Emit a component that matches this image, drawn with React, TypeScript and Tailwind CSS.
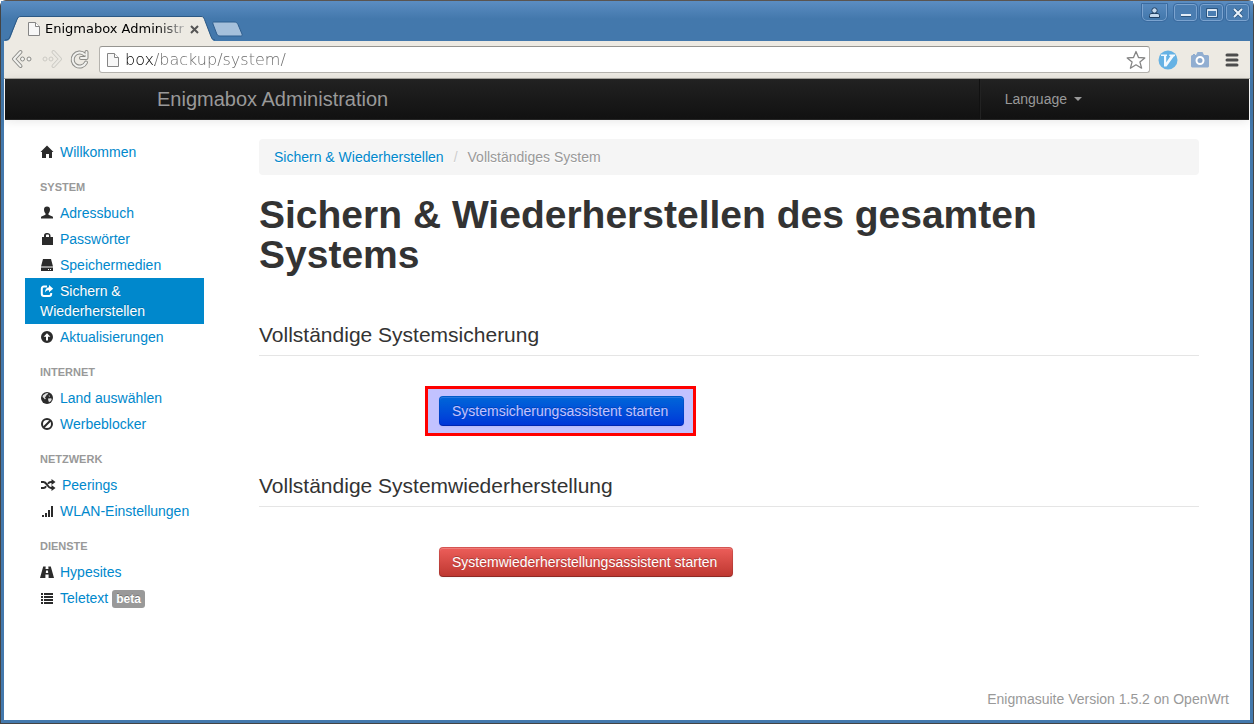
import React from 'react';

type IconProps = { className?: string };

const icon = (children: React.ReactNode, w = 14) =>
  function Icon({ className = '' }: IconProps) {
    return (
      <svg
        className={`mt-px inline-block align-text-top ${className}`}
        width={w}
        height="14"
        viewBox={`0 0 ${w} 14`}
        fill="currentColor"
        aria-hidden="true"
      >
        {children}
      </svg>
    );
  };

const HomeIcon = icon(<path d="M7 .5 13.5 7H12v6H9V9H6v4H2V7H.5z" />);
const UserIcon = icon(
  <path d="M7 .5c2 0 3 1.200 3 3 0 1.900-.8 3.300-1.500 4v1.200l4 1.700c.3.200.5.500.5.900V12.500H1v-1.200c0-.4.200-.7.500-.9l4-1.700V7.500C4.800 6.800 4 5.400 4 3.500c0-1.800 1-3 3-3z" />
);
const LockIcon = icon(
  <path d="M2 5h2V3.500C4 2 5 1 6.500 1h1C9 1 10.500 2 10.500 3.500V5H13v8H2zM6 5h3V3.600C9 3 8.500 2.500 8 2.500H7c-.6 0-1 .5-1 1.100z" fillRule="evenodd" />
);
const DriveIcon = icon(
  <path d="M3 1h8l2 7.500H1zM1 9.500h12V13H1zM8 11v1h1v-1zM10 11v1h1v-1z" fillRule="evenodd" />
);
const ShareIcon = icon(
  <>
    <path d="M7 2.500H4A2.300 2.300 0 0 0 1.800 4.800v4.900A2.300 2.300 0 0 0 4 12h5a2.300 2.300 0 0 0 2.200-2.300V9" fill="none" stroke="currentColor" strokeWidth="2" />
    <path d="M9 1l4.200 3.700L9 8.300V6.200C7.200 6.200 6 6.800 5 8.500 5 5.500 6.500 3.300 9 3.200z" />
  </>
);
const UpIcon = icon(
  <path d="M7 1a6 6 0 1 1 0 12A6 6 0 0 1 7 1zM7 3.200 3.600 6.700H6V10.500h2V6.700h2.400z" fillRule="evenodd" />
);
const GlobeIcon = icon(
  <>
    <circle cx="7" cy="7" r="6" />
    <path d="M6 2.300 8.300 2 7.500 3.500 6.500 4 6 5.500 4.800 6l1 1.500L5 8.500 3.800 7 2.500 6 3 4.200zM8.500 4.500l1.500.3-.7 1.200zM8 7.500l3-.3.8.8-.8 2-2 1.200L8.300 9.500z" fill="#fff" opacity=".85" />
  </>
);
const BanIcon = icon(
  <g fill="none" stroke="currentColor" strokeWidth="2">
    <circle cx="7" cy="7" r="5" />
    <path d="M3.500 10.500l7-7" />
  </g>
);
const ShuffleIcon = icon(
  <>
    <path d="M1 4h2.500c3.500 0 4 6 7.500 6h1M1 10h2.500c1.200 0 2-.8 2.600-1.800M8 5.800C8.700 4.700 9.600 4 11 4h1" fill="none" stroke="currentColor" strokeWidth="2" />
    <path d="M11.500 1 15.500 4l-4 3zM11.500 7l4 3-4 3z" />
  </>,
  16
);
const SignalIcon = icon(<path d="M2 11h2v2H2zM5 9h2v4H5zM8 6h2v7H8zM11 2h2v11h-2z" />);
const RoadIcon = icon(
  <path d="M3.200 1.500h2.500L5.500 4h3L8.300 1.500h2.500L14 13H8.600V9.500H5.400V13H0zM6 5.500 5.800 8h2.400L8 5.500z" fillRule="evenodd" />
);
const ListIcon = icon(
  <path d="M1 2h2v2H1zM4 2h9v2H4zM1 5h2v2H1zM4 5h9v2H4zM1 8h2v2H1zM4 8h9v2H4zM1 11h2v2H1zM4 11h9v2H4z" />
);

type Item = {
  label: string;
  Icon: React.ComponentType<IconProps>;
  active?: boolean;
  badge?: string;
};

const groups: { title?: string; items: Item[] }[] = [
  { items: [{ label: 'Willkommen', Icon: HomeIcon }] },
  {
    title: 'System',
    items: [
      { label: 'Adressbuch', Icon: UserIcon },
      { label: 'Passwörter', Icon: LockIcon },
      { label: 'Speichermedien', Icon: DriveIcon },
      { label: 'Sichern & Wiederherstellen', Icon: ShareIcon, active: true },
      { label: 'Aktualisierungen', Icon: UpIcon },
    ],
  },
  {
    title: 'Internet',
    items: [
      { label: 'Land auswählen', Icon: GlobeIcon },
      { label: 'Werbeblocker', Icon: BanIcon },
    ],
  },
  {
    title: 'Netzwerk',
    items: [
      { label: 'Peerings', Icon: ShuffleIcon },
      { label: 'WLAN-Einstellungen', Icon: SignalIcon },
    ],
  },
  {
    title: 'Dienste',
    items: [
      { label: 'Hypesites', Icon: RoadIcon },
      { label: 'Teletext', Icon: ListIcon, badge: 'beta' },
    ],
  },
];

function PageIcon() {
  return (
    <svg width="12" height="16" viewBox="0 0 12 16" className="shrink-0" aria-hidden="true">
      <path d="M.5 1.500h7l4 4v9H.5z" fill="#f7f7f7" stroke="#858585" />
      <path d="M7.500 1.500v4h4" fill="#fff" stroke="#858585" />
    </svg>
  );
}

function TitleBar() {
  const box =
    'flex h-[17px] w-[23px] items-center justify-center rounded-[3px] border border-[#7ba3cf] bg-[#4a7db1] outline outline-[#3a6ba0]';
  return (
    <header className="flex h-10 items-end justify-between bg-linear-to-b from-[#5b8dc2] to-[#4378ac] to-45% pl-1">
      <div className="flex items-end">
        <div className="flex h-[25px] items-stretch">
          <svg width="16" height="25" viewBox="0 0 16 25" aria-hidden="true">
            <path d="M0 25c3 0 4.500-1 5.500-3.500L12 4c1-2.500 2-3.500 4-3.500V25z" fill="#edeae3" />
            <path d="M0 24c3 0 4-1 5-3.500L12 3.500C13 1 14 .5 16 .5" fill="none" stroke="#2c5985" />
          </svg>
          <div className="flex w-[180px] items-center border-t border-[#2c5985] bg-[#edeae3] pl-[7px]">
            <PageIcon />
            <span className="ml-[5px] w-[142px] bg-linear-to-r from-black from-75% to-[#ccc] bg-clip-text font-['DejaVu_Sans',sans-serif] text-[13px] whitespace-nowrap text-transparent">
              Enigmabox Administr
            </span>
            <button aria-label="Tab schließen" className="ml-[3px] text-[#555]">
              <svg width="9" height="9" viewBox="0 0 9 9" aria-hidden="true">
                <path d="M1 1l7 7M8 1L1 8" stroke="currentColor" strokeWidth="2" />
              </svg>
            </button>
          </div>
          <svg width="14" height="25" viewBox="0 0 14 25" aria-hidden="true">
            <path d="M0 .5c2 0 2.500.5 3.500 3L10 21c1 2.500 2 4 4 4H0z" fill="#edeae3" />
            <path d="M0 .5c2 0 2.500.5 3.500 3L10 20.500c1 2.500 2 3.500 4 3.500" fill="none" stroke="#2c5985" />
          </svg>
        </div>
        <button aria-label="Neuer Tab" className="mb-1 -ml-1">
          <svg width="32" height="16" viewBox="0 0 32 16" aria-hidden="true">
            <path d="M3 1h20c2 0 3 .6 4 2.500L31 13c.5 1.500 0 2-1.500 2H9c-1.500 0-2.500-.5-3.200-2L2 3C1.500 1.500 2 1 3 1z" fill="#a5c0db" stroke="#2f5e8e" />
          </svg>
        </button>
      </div>
      <div className="flex items-start gap-[3px] self-start pt-[3px] pr-1">
        <button aria-label="Profil" className="mr-1 flex h-[17px] w-[25px] items-center justify-center rounded-b-[5px] border border-t-0 border-[#7ba3cf] outline outline-[#3a6ba0]">
          <svg width="11" height="11" viewBox="0 0 11 11" aria-hidden="true">
            <path d="M.5 10.500v-2C.5 7 1.500 6.500 3 6.500h5c1.500 0 2.500.5 2.500 2v2z" fill="#c4d9ee" stroke="#1e3f63" />
            <circle cx="5.500" cy="3.500" r="2.700" fill="#c4d9ee" stroke="#1e3f63" />
          </svg>
        </button>
        <button aria-label="Minimieren" className={box}>
          <svg width="12" height="12" viewBox="0 0 12 12" aria-hidden="true">
            <path d="M1 8h10" stroke="#e3edf7" strokeWidth="2" />
            <path d="M1 9.500h10" stroke="#2c5680" />
          </svg>
        </button>
        <button aria-label="Maximieren" className={box}>
          <svg width="12" height="12" viewBox="0 0 12 12" aria-hidden="true">
            <path d="M.5 1.500h11v9H.5z" fill="none" stroke="#2c5680" />
            <path d="M1.500 2.500h9v7h-9zM1.500 3.500h9" fill="none" stroke="#dce8f4" />
          </svg>
        </button>
        <button aria-label="Schließen" className={box}>
          <svg width="12" height="12" viewBox="0 0 12 12" aria-hidden="true">
            <path d="M2 2l8 8M10 2l-8 8" stroke="#2c5680" strokeWidth="3.500" />
            <path d="M2 2l8 8M10 2l-8 8" stroke="#e8f1fa" strokeWidth="2" />
          </svg>
        </button>
      </div>
    </header>
  );
}

function Toolbar() {
  return (
    <div className="flex h-[38px] items-center border-b border-[#aaa8a2] bg-[#edeae3] pr-2 pl-[7px]">
      <button aria-label="Zurück">
        <svg width="22" height="22" viewBox="0 0 22 22" fill="none" aria-hidden="true">
          <path d="M9.500 3 3 10l6.500 7" stroke="#8b8b87" strokeWidth="4" strokeLinejoin="round" strokeLinecap="round" />
          <path d="M9.500 3 3 10l6.500 7" stroke="#f1f1ee" strokeWidth="2" strokeLinejoin="round" strokeLinecap="round" />
          <g stroke="#8b8b87" fill="#f5f5f2">
            <circle cx="11.500" cy="10" r="2" />
            <circle cx="18" cy="10" r="2" />
          </g>
        </svg>
      </button>
      <button aria-label="Vorwärts" disabled className="ml-2">
        <svg width="22" height="22" viewBox="0 0 22 22" fill="none" aria-hidden="true">
          <path d="M12.500 3l6.500 7-6.500 7" stroke="#cccac4" strokeWidth="4" strokeLinejoin="round" strokeLinecap="round" />
          <path d="M12.500 3l6.500 7-6.500 7" stroke="#ebe9e3" strokeWidth="2" strokeLinejoin="round" strokeLinecap="round" />
          <g stroke="#cccac4">
            <circle cx="4" cy="10" r="2" />
            <circle cx="10" cy="10" r="2" />
          </g>
        </svg>
      </button>
      <button aria-label="Neu laden" className="ml-[6px]">
        <svg width="22" height="22" viewBox="0 0 22 22" fill="none" aria-hidden="true">
          <path d="M15.500 5.500A7 7 0 1 0 17 13.500M17.500 3v6H12" stroke="#8b8b87" strokeWidth="4" strokeLinejoin="round" strokeLinecap="round" />
          <path d="M15.500 5.500A7 7 0 1 0 17 13.500M17.500 3v6H12" stroke="#f1f1ee" strokeWidth="2" strokeLinejoin="round" strokeLinecap="round" />
        </svg>
      </button>
      <div className="ml-2 flex h-[27px] grow items-center rounded-[3px] border border-[#b5b3ae] border-t-[#969591] bg-white pr-[3px] pl-[7px]">
        <PageIcon />
        <input
          aria-label="Adresse"
          defaultValue="box/backup/system/"
          className="ml-[6px] min-w-0 grow bg-[linear-gradient(to_right,#000_30px,#666_30px)] bg-clip-text font-['DejaVu_Sans',sans-serif] text-base font-extralight text-transparent outline-none"
        />
        <button aria-label="Lesezeichen">
          <svg width="20" height="20" viewBox="0 0 20 20" aria-hidden="true">
            <path d="M10 1.500l2.500 6 6.300.4-4.900 4 1.700 6.300L10 14.800l-5.600 3.400 1.700-6.300-4.900-4 6.300-.4z" fill="#fff" stroke="#858585" strokeWidth="1.300" strokeLinejoin="round" />
          </svg>
        </button>
      </div>
      <div className="ml-2 flex items-center gap-3">
        <button aria-label="Vimium">
          <svg width="20" height="20" viewBox="0 0 20 20" aria-hidden="true">
            <circle cx="10" cy="10" r="9.500" fill="#66b2e4" />
            <path d="M3 4.500h6V6H8.200v6.500L12.500 6h-1.200V4.500H17V6l-1.200.4L8.500 16.500H6V6H4L3 6z" fill="#f2f9ff" />
          </svg>
        </button>
        <button aria-label="Bildschirmfoto">
          <svg width="20" height="20" viewBox="0 0 20 20" aria-hidden="true">
            <path d="M2 5h1V4h2v1h1l1.500-3h5L14 5h4l1 1v10.500l-1 1H2l-1-1V6z" fill="#91aed1" />
            <circle cx="10" cy="10.500" r="3.500" fill="#8aa8cc" stroke="#fff" strokeWidth="2" />
          </svg>
        </button>
        <button aria-label="Menü">
          <svg width="20" height="20" viewBox="0 0 20 20" aria-hidden="true">
            <path d="M5 5h10M5 10h10M5 15h10" stroke="#4c4c4c" strokeWidth="3" strokeLinecap="round" />
          </svg>
        </button>
      </div>
    </div>
  );
}

function NavBar() {
  return (
    <nav className="flex h-[41px] justify-center border-b border-[#252525] bg-linear-to-b from-[#222] to-[#111] text-[#999] shadow-[0_1px_10px_rgba(0,0,0,.1)]">
      <div className="flex w-[940px] items-stretch justify-between">
        <a href="#" className="flex items-center text-xl">
          Enigmabox Administration
        </a>
        <div className="flex items-stretch">
          <div className="mr-[9px] border-r border-l border-l-[#111] border-r-[#222]" />
          <button className="flex items-center gap-[7px] px-[15px]">
            Language
            <svg width="8" height="4" viewBox="0 0 8 4" fill="currentColor" aria-hidden="true">
              <path d="M0 0h8L4 4z" />
            </svg>
          </button>
        </div>
      </div>
    </nav>
  );
}

function Sidebar() {
  return (
    <nav className="w-[179px] shrink-0">
      {groups.map(({ title, items }, i) => (
        <section key={i} className={title ? 'mt-[9px]' : ''}>
          {title && (
            <h2 className="px-[15px] py-[3px] text-[11px] leading-5 font-bold text-[#999] uppercase">{title}</h2>
          )}
          <ul>
            {items.map(({ label, Icon, active, badge }) => (
              <li key={label}>
                <a
                  href="#"
                  className={`block py-[3px] pr-2 pl-[15px] ${
                    active ? 'bg-[#08c] text-white [text-shadow:0_-1px_0_rgba(0,0,0,.2)]' : 'text-[#08c]'
                  }`}
                >
                  <Icon className={active ? 'mr-[6px]' : 'mr-[6px] text-[#2b2b2b]'} />
                  {label}
                  {badge && (
                    <span className="ml-1 inline-block rounded-[3px] bg-[#999] px-1 text-xs leading-[18px] font-bold text-white [text-shadow:0_-1px_0_rgba(0,0,0,.25)]">
                      {badge}
                    </span>
                  )}
                </a>
              </li>
            ))}
          </ul>
        </section>
      ))}
    </nav>
  );
}

const button =
  'block rounded-sm border border-black/10 border-b-black/25 bg-origin-border bg-linear-to-b py-1 pr-[15px] pl-3 text-sm leading-5 text-white [text-shadow:0_-1px_0_rgba(0,0,0,.25)] shadow-[inset_0_1px_0_rgba(255,255,255,.2),0_1px_2px_rgba(0,0,0,.05)]';

function Section({ title, children }: { title: string; children: React.ReactNode }) {
  return (
    <section className="mt-10">
      <h2 className="border-b border-[#e5e5e5] text-[21px] leading-10">{title}</h2>
      <div className="mt-10 flex pl-[180px]">{children}</div>
    </section>
  );
}

export default function App() {
  return (
    <div className="flex min-h-screen flex-col rounded-t-md border border-[#444] border-t-[#5a5450] bg-[#4378ac] font-['Liberation_Sans',Arial,sans-serif] text-sm leading-5 text-[#333]">
      <TitleBar />
      <div className="mx-[3px] mb-[3px] flex grow flex-col bg-white">
        <Toolbar />
        <div className="mx-px flex grow flex-col">
          <NavBar />
          <div className="flex px-5 pt-[19px]">
            <Sidebar />
            <main className="mr-[30px] ml-[55px] min-w-0 grow">
              <ol className="flex rounded-sm bg-[#f5f5f5] px-[15px] py-2 [text-shadow:0_1px_0_#fff]">
                <li>
                  <a href="#" className="text-[#08c]">
                    Sichern &amp; Wiederherstellen
                  </a>
                </li>
                <li className="px-[10px] text-[#ccc]">/</li>
                <li className="text-[#999]">Vollständiges System</li>
              </ol>
              <h1 className="mt-5 text-[39px] leading-10 font-bold">Sichern &amp; Wiederherstellen des gesamten Systems</h1>
              <Section title="Vollständige Systemsicherung">
                <div className="relative">
                  <button className={`${button} from-[#08c] to-[#04c]`}>Systemsicherungsassistent starten</button>
                  <div className="pointer-events-none absolute -inset-y-[10px] -right-3 -left-[14px] border-[3px] border-[red] bg-[#0000ff]/24" />
                </div>
              </Section>
              <Section title="Vollständige Systemwiederherstellung">
                <button className={`${button} from-[#ee5f5b] to-[#bd362f]`}>
                  Systemwiederherstellungsassistent starten
                </button>
              </Section>
            </main>
          </div>
          <footer className="mt-auto px-5 pt-5 pb-[11px] text-right text-[#999]">Enigmasuite Version 1.5.2 on OpenWrt</footer>
        </div>
      </div>
    </div>
  );
}
